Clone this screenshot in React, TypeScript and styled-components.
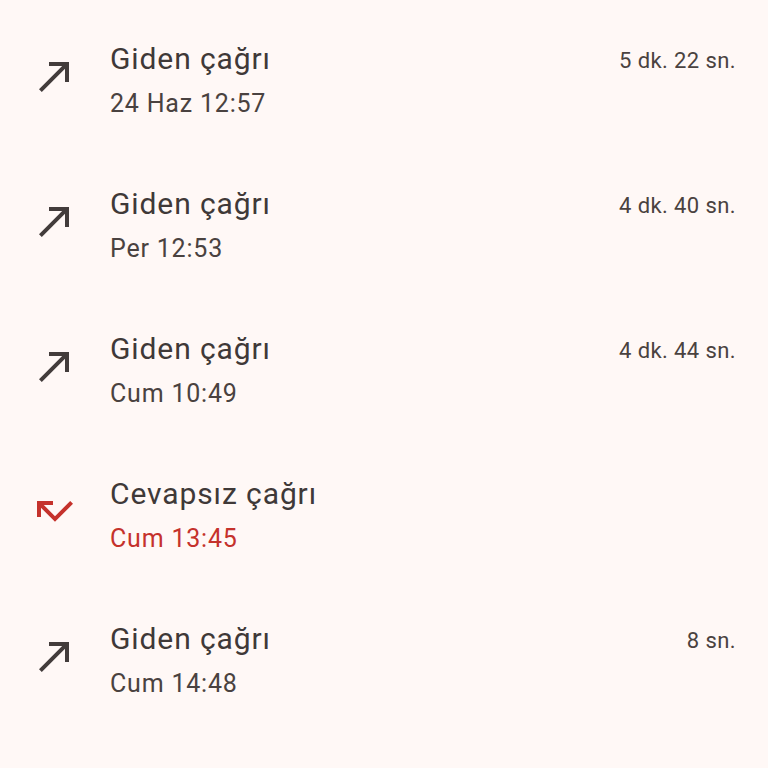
import styled, { createGlobalStyle } from 'styled-components';

const GlobalStyle = createGlobalStyle`
  html, body {
    margin: 0;
    padding: 0;
    background: #fff8f6;
  }
  body {
    font-family: Roboto, "Noto Sans", sans-serif;
    color: #3e3837;
  }
`;

const List = styled.div`
  width: 768px;
  height: 768px;
  overflow: hidden;
  background: #fff8f6;
`;

const Row = styled.div`
  display: flex;
  align-items: flex-start;
  height: 145px;
  box-sizing: border-box;
  padding: 39px 32px 0 31px;
`;

const IconBox = styled.div<{ $missed?: boolean }>`
  width: 48px;
  height: 48px;
  margin-top: 13px;
  flex-shrink: 0;
  color: ${({ $missed }) => ($missed ? '#c5322c' : '#433c3b')};
  svg {
    display: block;
  }
`;

const Body = styled.div`
  flex: 1;
  margin-left: 31px;
  display: flex;
  flex-direction: column;
`;

const Title = styled.div`
  font-size: 30px;
  line-height: 40px;
  letter-spacing: 0.9px;
  color: #3f3938;
`;

const Time = styled.div<{ $missed?: boolean }>`
  margin-top: 7px;
  font-size: 25px;
  line-height: 36px;
  letter-spacing: 0.8px;
  color: ${({ $missed }) => ($missed ? '#c5322c' : '#4a4240')};
`;

const Duration = styled.div`
  font-size: 22px;
  line-height: 44px;
  letter-spacing: 0.4px;
  color: #4a4240;
`;

interface Call {
  id: number;
  title: string;
  time: string;
  duration?: string;
  missed?: boolean;
}

const calls: Call[] = [
  { id: 1, title: 'Giden çağrı', time: '24 Haz 12:57', duration: '5 dk. 22 sn.' },
  { id: 2, title: 'Giden çağrı', time: 'Per 12:53', duration: '4 dk. 40 sn.' },
  { id: 3, title: 'Giden çağrı', time: 'Cum 10:49', duration: '4 dk. 44 sn.' },
  { id: 4, title: 'Cevapsız çağrı', time: 'Cum 13:45', missed: true },
  { id: 5, title: 'Giden çağrı', time: 'Cum 14:48', duration: '8 sn.' },
];

const OutgoingIcon = () => (
  <svg width="48" height="48" viewBox="0 0 24 24" fill="currentColor">
    <path d="M9 5v2h6.59L4 18.59 5.41 20 17 8.41V15h2V5z" />
  </svg>
);

const MissedIcon = () => (
  <svg width="48" height="48" viewBox="0 0 24 24" fill="currentColor">
    <path d="M19.59 7L12 14.59 6.41 9H11V7H3v8h2v-4.59l7 7 9-9z" />
  </svg>
);

export default function App() {
  return (
    <List>
      <GlobalStyle />
      {calls.map(call => (
        <Row key={call.id}>
          <IconBox $missed={call.missed}>
            {call.missed ? <MissedIcon /> : <OutgoingIcon />}
          </IconBox>
          <Body>
            <Title>{call.title}</Title>
            <Time $missed={call.missed}>{call.time}</Time>
          </Body>
          {call.duration && <Duration>{call.duration}</Duration>}
        </Row>
      ))}
    </List>
  );
}
